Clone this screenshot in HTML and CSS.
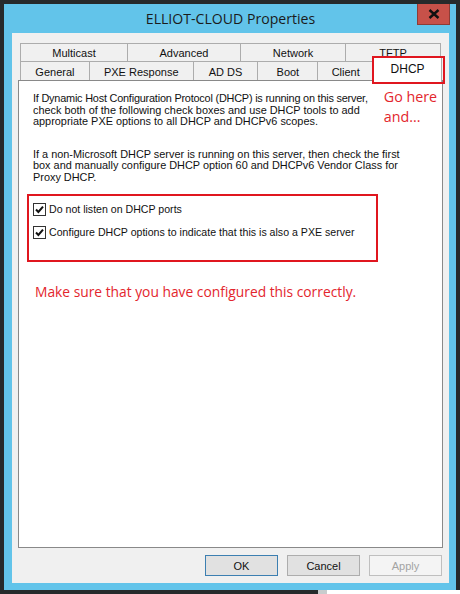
FILE: index.html
```html
<!DOCTYPE html>
<html>
<head>
<meta charset="utf-8">
<link rel="stylesheet" href="styles.css">
</head>
<body>
<div class="screen">
  <div class="top-row">
    <div class="window">
      <div class="titlebar">
        <span class="title">ELLIOT-CLOUD Properties</span>
        <div class="close">
          <svg width="12" height="10" viewBox="0 0 12 10"><path d="M1.5 1 L10.5 9 M10.5 1 L1.5 9" stroke="#111" stroke-width="2.4"/></svg>
        </div>
      </div>
      <div class="client">
        <div class="tabs">
          <div class="tab-row row1">
            <div class="tab w-multicast">Multicast</div>
            <div class="tab w-advanced">Advanced</div>
            <div class="tab w-network">Network</div>
            <div class="tab w-tftp last">TFTP</div>
          </div>
          <div class="tab-row row2">
            <div class="tab w-general">General</div>
            <div class="tab w-pxe">PXE Response</div>
            <div class="tab w-adds">AD DS</div>
            <div class="tab w-boot">Boot</div>
            <div class="tab w-client">Client</div>
            <div class="tab selected">DHCP<span class="mark-tab"></span></div>
          </div>
        </div>
        <div class="panel">
          <div class="intro">
            <p class="para"><span class="tight">If Dynamic Host Configuration Protocol (DHCP) is running on this server,</span><br>check both of the following check boxes and use DHCP tools to add<br>appropriate PXE options to all DHCP and DHCPv6 scopes.</p>
            <p class="note note-go">Go here<br>and...</p>
          </div>
          <p class="para para2">If a non-Microsoft DHCP server is running on this server, then check the first<br>box and manually configure DHCP option 60 and DHCPv6 Vendor Class for<br>Proxy DHCP.</p>
          <div class="checks">
            <div class="check">
              <span class="box"><svg width="13" height="13" viewBox="0 0 13 13"><rect x="0.5" y="0.5" width="12" height="12" fill="#fff" stroke="#333"/><path d="M3 6.5 L5.4 9 L10 3.6" fill="none" stroke="#111" stroke-width="2"/></svg></span>
              <span>Do not listen on DHCP ports</span>
            </div>
            <div class="check">
              <span class="box"><svg width="13" height="13" viewBox="0 0 13 13"><rect x="0.5" y="0.5" width="12" height="12" fill="#fff" stroke="#333"/><path d="M3 6.5 L5.4 9 L10 3.6" fill="none" stroke="#111" stroke-width="2"/></svg></span>
              <span>Configure DHCP options to indicate that this is also a PXE server</span>
            </div>
          </div>
          <p class="note note-make">Make sure that you have configured this correctly.</p>
        </div>
        <div class="buttons">
          <div class="btn default">OK</div>
          <div class="btn">Cancel</div>
          <div class="btn disabled">Apply</div>
        </div>
      </div>
    </div>
  </div>
  <div class="bottom-row">
    <div class="b-dark"></div>
    <div class="b-gray"></div>
    <div class="b-white"></div>
  </div>
</div>
</body>
</html>
```
FILE: styles.css
```css
* { box-sizing: border-box; }
html, body { margin: 0; padding: 0; }
body { background: #262a2b; width: 460px; height: 594px; overflow: hidden; font-family: "Liberation Sans", Arial, sans-serif; }
.screen { width: 460px; height: 594px; display: flex; flex-direction: column; }
.top-row { padding: 4px 4px 0 4px; height: 590px; }
.window { position: relative; width: 452px; height: 586px; background: #62c4ea; padding: 0 7px 7px 8px; display: flex; flex-direction: column; }
.titlebar { height: 29px; display: flex; align-items: center; justify-content: center; }
.title { font-family: "Open Sans", "Noto Sans", sans-serif; font-size: 14.1px; color: #1b1b1b; margin-top: -1px; }
.close { position: absolute; left: 413px; top: 0; width: 33px; height: 21px; background: #c75149; border: 1px solid #8d3c36; border-top: none; display: flex; align-items: center; justify-content: center; }
.client { flex: 1; background: #f0f0f0; padding: 10px 7px 0 6px; display: flex; flex-direction: column; }
.tabs { padding-left: 2px; }
.tab-row { display: flex; font-size: 11px; color: #111; }
.tab { border: 1px solid #acacac; border-right: none; border-bottom: none; background: #f0f0f0; display: flex; align-items: center; justify-content: center; padding-top: 1px; }
.row1 .tab { height: 18px; padding-top: 0; }
.row2 .tab { height: 19px; }
.tab.last { border-right: 1px solid #acacac; }
.w-multicast { width: 107px; }
.w-advanced { width: 113px; }
.w-network { width: 105px; }
.w-tftp { width: 96px; }
.w-general { width: 69px; }
.w-pxe { width: 104px; }
.w-adds { width: 65px; }
.w-boot { width: 60px; }
.w-client { width: 56px; }
.tab.selected { position: relative; z-index: 2; width: 69px; height: 25px; margin-top: -4px; margin-bottom: -2px; background: #fff; border-right: 1px solid #acacac; font-size: 12px; padding-bottom: 4px; }
.mark-tab { position: absolute; left: -2px; top: -2px; width: 73px; height: 28px; border: 2px solid #e0161f; }
.panel { position: relative; width: 425px; height: 468px; background: #fff; border: 1px solid #898989; padding: 12px 0 0 14px; font-size: 10.9px; color: #111; display: flex; flex-direction: column; align-items: flex-start; }
.para { margin: 0; line-height: 11.6px; }
.tight { letter-spacing: -0.21px; }
.intro { display: flex; gap: 16px; }
.para2 { margin-top: 21px; }
.note { margin: 0; color: #e3262d; font-family: "Open Sans", "Noto Sans", sans-serif; }
.note-go { font-size: 14.3px; line-height: 20px; margin-top: -6px; }
.checks { flex: none; margin: 10px 0 0 -6px; width: 351px; height: 68px; border: 2px solid #e0161f; padding: 7px 0 0 4px; display: flex; flex-direction: column; gap: 10px; }
.check { display: flex; align-items: center; gap: 3px; font-size: 10.6px; height: 13px; white-space: nowrap; }
.box { width: 13px; height: 13px; display: block; flex: none; }
.box svg { display: block; }
.note-make { font-size: 13.8px; margin: 20px 0 0 2px; line-height: 20px; }
.buttons { display: flex; justify-content: flex-end; gap: 9px; margin-top: 7px; }
.btn { width: 73px; height: 21px; background: #e1e1e1; border: 1px solid #adadad; display: flex; align-items: center; justify-content: center; font-size: 11px; color: #111; }
.btn.default { border-color: #3c7fb1; }
.btn.disabled { background: #f4f4f4; border-color: #bfbfbf; color: #a3a3a3; }
.bottom-row { display: flex; height: 4px; }
.b-dark { width: 318px; background: #262a2b; }
.b-gray { width: 9px; background: #c8cccd; }
.b-white { flex: 1; background: #fff; }
```
